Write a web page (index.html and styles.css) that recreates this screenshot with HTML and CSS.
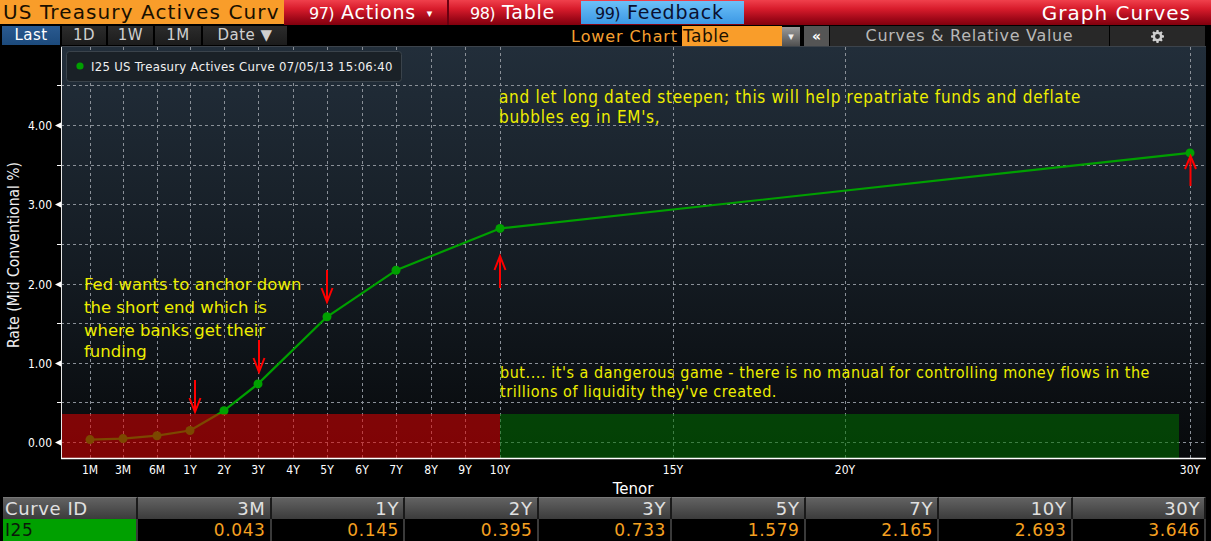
FILE: index.html
```html
<!DOCTYPE html>
<html>
<head>
<meta charset="utf-8">
<link rel="stylesheet" href="styles.css">
</head>
<body>
<div class="app">
  <div class="topbar">
    <div class="title">US Treasury Actives Curv</div>
    <div class="redbar">
      <div class="rbtn actions"><span class="num">97)</span> Actions <span class="caret">▾</span></div>
      <div class="rbtn tablebtn"><span class="num">98)</span> Table</div>
      <div class="rbtn feedback"><span class="num">99)</span> Feedback</div>
      <div class="spacer"></div>
      <div class="gc">Graph Curves</div>
    </div>
  </div>
  <div class="toolbar">
    <div class="tbtn active w-last">Last</div>
    <div class="tbtn w-1d">1D</div>
    <div class="tbtn w-1w">1W</div>
    <div class="tbtn w-1m">1M</div>
    <div class="tbtn w-date">Date ▼</div>
    <div class="spacer"></div>
    <div class="lc-label">Lower Chart</div>
    <div class="lc-select">Table</div>
    <div class="lc-drop">▾</div>
    <div class="collapse">«</div>
    <div class="crv">Curves &amp; Relative Value</div>
    <div class="gear">
      <svg width="13" height="13" viewBox="0 0 16 16"><path fill="#cfcfcf" d="M6.8 0h2.4l.4 2.1 1.3.6 1.8-1.2 1.7 1.7-1.2 1.8.6 1.3 2.2.4v2.4l-2.2.4-.6 1.3 1.2 1.8-1.7 1.7-1.8-1.2-1.3.6-.4 2.3H6.8l-.4-2.3-1.3-.6-1.8 1.2-1.7-1.7 1.2-1.8-.6-1.3L0 9.2V6.8l2.2-.4.6-1.3-1.2-1.8 1.7-1.7 1.8 1.2 1.3-.6z M8 5a3 3 0 1 0 0 6a3 3 0 1 0 0-6z" fill-rule="evenodd"/></svg>
    </div>
  </div>
  <svg class="chart" width="1211" height="451" viewBox="0 46 1211 451">
    <defs>
      <linearGradient id="bg" x1="0" y1="0" x2="0" y2="1">
        <stop offset="0" stop-color="#222e3a"/>
        <stop offset="0.55" stop-color="#141b22"/>
        <stop offset="1" stop-color="#07090b"/>
      </linearGradient>
    </defs>
    <rect x="61" y="47" width="1145" height="411" fill="url(#bg)"/>
    <line x1="61" y1="46.5" x2="1206" y2="46.5" stroke="#3c434b"/>
    <g class="grid" stroke="#8a9098" stroke-width="1" stroke-dasharray="3,3">
      <line x1="61" y1="85.5" x2="1206" y2="85.5"/>
      <line x1="61" y1="125.5" x2="1206" y2="125.5"/>
      <line x1="61" y1="165.5" x2="1206" y2="165.5"/>
      <line x1="61" y1="204.5" x2="1206" y2="204.5"/>
      <line x1="61" y1="244.5" x2="1206" y2="244.5"/>
      <line x1="61" y1="284.5" x2="1206" y2="284.5"/>
      <line x1="61" y1="323.5" x2="1206" y2="323.5"/>
      <line x1="61" y1="363.5" x2="1206" y2="363.5"/>
      <line x1="61" y1="402.5" x2="1206" y2="402.5"/>
      <line x1="61" y1="442.5" x2="1206" y2="442.5"/>
      <line x1="90.5" y1="47" x2="90.5" y2="458"/>
      <line x1="123.5" y1="47" x2="123.5" y2="458"/>
      <line x1="157.5" y1="47" x2="157.5" y2="458"/>
      <line x1="190.5" y1="47" x2="190.5" y2="458"/>
      <line x1="224.5" y1="47" x2="224.5" y2="458"/>
      <line x1="258.5" y1="47" x2="258.5" y2="458"/>
      <line x1="293.5" y1="47" x2="293.5" y2="458"/>
      <line x1="327.5" y1="47" x2="327.5" y2="458"/>
      <line x1="362.5" y1="47" x2="362.5" y2="458"/>
      <line x1="396.5" y1="47" x2="396.5" y2="458"/>
      <line x1="431.5" y1="47" x2="431.5" y2="458"/>
      <line x1="465.5" y1="47" x2="465.5" y2="458"/>
      <line x1="500.5" y1="47" x2="500.5" y2="458"/>
      <line x1="673.5" y1="47" x2="673.5" y2="458"/>
      <line x1="845.5" y1="47" x2="845.5" y2="458"/>
      <line x1="1190.5" y1="47" x2="1190.5" y2="458"/>
    </g>
    <polyline fill="none" stroke="#00a000" stroke-width="2.2" stroke-linejoin="round"
      points="90,439.6 123,438.6 157,435.7 190,430.5 224,410.7 258,383.9 327,316.8 396,270.3 500,228.4 1190,152.9"/>
    <g fill="#00a000">
      <circle cx="90" cy="439.6" r="4.5"/>
      <circle cx="123" cy="438.6" r="4.5"/>
      <circle cx="157" cy="435.7" r="4.5"/>
      <circle cx="190" cy="430.5" r="4.5"/>
      <circle cx="224" cy="410.7" r="4.5"/>
      <circle cx="258" cy="383.9" r="4.5"/>
      <circle cx="327" cy="316.8" r="4.5"/>
      <circle cx="396" cy="270.3" r="4.5"/>
      <circle cx="500" cy="228.4" r="4.5"/>
      <circle cx="1190" cy="152.9" r="4.5"/>
    </g>
    <rect x="61" y="414" width="439" height="44" fill="rgb(225,0,0)" fill-opacity="0.55"/>
    <rect x="500" y="414" width="679" height="44" fill="rgb(0,112,0)" fill-opacity="0.55"/>
    <line x1="61" y1="458.5" x2="1206" y2="458.5" stroke="#ffffff" stroke-width="1.5"/>
    <line x1="61.5" y1="47" x2="61.5" y2="458" stroke="#e8e8e8" stroke-width="1"/>
    <g stroke="#ffffff" stroke-width="1">
      <line x1="57" y1="85.5" x2="61" y2="85.5"/>
      <line x1="57" y1="165.5" x2="61" y2="165.5"/>
      <line x1="57" y1="244.5" x2="61" y2="244.5"/>
      <line x1="57" y1="323.5" x2="61" y2="323.5"/>
      <line x1="57" y1="402.5" x2="61" y2="402.5"/>
    </g>
    <g fill="#ffffff">
      <polygon points="55,125.5 61,122.5 61,128.5"/>
      <polygon points="55,204.5 61,201.5 61,207.5"/>
      <polygon points="55,284.5 61,281.5 61,287.5"/>
      <polygon points="55,363.5 61,360.5 61,366.5"/>
      <polygon points="55,442.5 61,439.5 61,445.5"/>
    </g>
    <g class="ylab" text-anchor="end">
      <text x="52" y="130">4.00</text>
      <text x="52" y="209">3.00</text>
      <text x="52" y="289">2.00</text>
      <text x="52" y="368">1.00</text>
      <text x="52" y="447">0.00</text>
    </g>
    <text class="ytitle" transform="translate(19,255) rotate(-90)" text-anchor="middle">Rate (Mid Conventional %)</text>
    <g class="xlab" text-anchor="middle">
      <text x="90" y="474">1M</text>
      <text x="123" y="474">3M</text>
      <text x="157" y="474">6M</text>
      <text x="190" y="474">1Y</text>
      <text x="224" y="474">2Y</text>
      <text x="258" y="474">3Y</text>
      <text x="293" y="474">4Y</text>
      <text x="327" y="474">5Y</text>
      <text x="362" y="474">6Y</text>
      <text x="396" y="474">7Y</text>
      <text x="431" y="474">8Y</text>
      <text x="465" y="474">9Y</text>
      <text x="500" y="474">10Y</text>
      <text x="673" y="474">15Y</text>
      <text x="845" y="474">20Y</text>
      <text x="1190" y="474">30Y</text>
    </g>
    <text class="tenor" x="633" y="494" text-anchor="middle">Tenor</text>
    <g stroke="#ff0000" stroke-width="2" fill="none">
      <line x1="195" y1="380" x2="195" y2="412"/>
      <polyline points="189.5,398 195,412 200.5,398"/>
      <line x1="259" y1="340" x2="259" y2="372"/>
      <polyline points="253.5,358 259,372 264.5,358"/>
      <line x1="327" y1="270" x2="327" y2="302"/>
      <polyline points="321.5,288 327,302 332.5,288"/>
      <line x1="500" y1="288" x2="500" y2="256"/>
      <polyline points="494.5,270 500,256 505.5,270"/>
      <line x1="1190.5" y1="186" x2="1190.5" y2="156"/>
      <polyline points="1185,169 1190.5,156 1196,169"/>
    </g>
    <rect x="66.5" y="51.5" width="335" height="30" rx="3" fill="#1a2127" stroke="#3a434b"/>
    <circle cx="80" cy="66" r="3.6" fill="#00a000"/>
    <text class="legend" x="91" y="71">I25 US Treasury Actives Curve 07/05/13 15:06:40</text>
    <g class="note1">
      <text x="84" y="290">Fed wants to anchor down</text>
      <text x="84" y="313">the short end which is</text>
      <text x="84" y="336">where banks get their</text>
      <text x="84" y="357">funding</text>
    </g>
    <g class="note2">
      <text x="499" y="103">and let long dated steepen; this will help repatriate funds and deflate</text>
      <text x="499" y="123">bubbles eg in EM's,</text>
    </g>
    <g class="note3">
      <text x="500" y="378">but.... it's a dangerous game - there is no manual for controlling money flows in the</text>
      <text x="500" y="397">trillions of liquidity they've created.</text>
    </g>
  </svg>
  <div class="dtable">
    <div class="th first">Curve ID</div>
    <div class="th">3M</div>
    <div class="th">1Y</div>
    <div class="th">2Y</div>
    <div class="th">3Y</div>
    <div class="th">5Y</div>
    <div class="th">7Y</div>
    <div class="th">10Y</div>
    <div class="th">30Y</div>
    <div class="td id">I25</div>
    <div class="td">0.043</div>
    <div class="td">0.145</div>
    <div class="td">0.395</div>
    <div class="td">0.733</div>
    <div class="td">1.579</div>
    <div class="td">2.165</div>
    <div class="td">2.693</div>
    <div class="td">3.646</div>
  </div>
</div>
</body>
</html>
```
FILE: styles.css
```css
* { box-sizing: border-box; }
html, body { margin: 0; padding: 0; background: #000; }
body { width: 1211px; height: 541px; overflow: hidden; font-family: "DejaVu Sans", "Liberation Sans", sans-serif; }
.app { display: flex; flex-direction: column; width: 1211px; }

.topbar { display: flex; height: 25px; }
.title {
  width: 284px; background: #f99d2a; color: #1a1000;
  font-size: 20px; letter-spacing: 1.1px; line-height: 24px; padding-left: 3px;
  white-space: nowrap; overflow: hidden; border-bottom: 1px solid #000;
}
.redbar {
  flex: 1; display: flex; align-items: stretch;
  background: linear-gradient(#f0404c 0%, #d81c2c 35%, #a00818 75%, #82000e 100%);
}
.rbtn { color: #fff; font-size: 19px; letter-spacing: 0.8px; line-height: 24px; white-space: nowrap; }
.rbtn .num { font-size: 16px; letter-spacing: -0.5px; }
.actions { width: 165px; padding-left: 25px; border-right: 2px solid #6a0010; }
.actions .caret { font-size: 11px; margin-left: 4px; vertical-align: 2px; }
.tablebtn { width: 132px; padding-left: 21px; }
.feedback {
  width: 163px; margin: 1px 0 1px 0; padding-left: 14px;
  background: linear-gradient(#6cc0f8, #3c98e4); color: #0a1030;
  line-height: 22px;
}
.spacer { flex: 1; }
.gc { color: #fff; font-size: 20px; letter-spacing: 1px; line-height: 26px; padding-right: 20px; }

.toolbar { display: flex; height: 21px; padding-top: 1px; padding-right: 6px; align-items: stretch; }
.tbtn {
  margin-left: 2px; background: linear-gradient(#2c2c2c, #1c1c1c); color: #d0d0d0;
  font-size: 15px; letter-spacing: 0.5px; line-height: 19px; text-align: center; height: 19px;
}
.tbtn.active { background: linear-gradient(#2a5a90, #1c4a7c); color: #fff; }
.w-last { width: 58px; }
.w-1d { width: 44px; }
.w-1w { width: 45px; }
.w-1m { width: 46px; }
.w-date { width: 84px; }
.lc-label { color: #f7a030; font-size: 16px; letter-spacing: 0.9px; line-height: 21px; padding-right: 4px; }
.lc-select { width: 100px; background: #f99d2a; color: #1a1000; font-size: 17px; letter-spacing: 0.5px; line-height: 21px; padding-left: 1px; height: 21px; }
.lc-drop { width: 18px; height: 19px; margin-top: 1px; background: linear-gradient(#9a9a9a, #505050); color: #eee; font-size: 11px; line-height: 19px; text-align: center; }
.collapse { width: 25px; margin-left: 4px; height: 20px; background: #555; color: #fff; font-size: 14px; line-height: 21px; text-align: center; font-weight: bold; }
.crv { width: 279px; margin-left: 1px; height: 20px; background: #282828; color: #b8b8b8; font-size: 16px; letter-spacing: 0.7px; line-height: 20px; text-align: center; }
.gear { width: 95px; margin-left: 1px; height: 20px; background: #282828; display: flex; align-items: center; justify-content: center; }

.chart { display: block; }
.chart .ylab text { fill: #fff; font-size: 12px; font-family: "DejaVu Sans Condensed", "DejaVu Sans", sans-serif; font-stretch: condensed; }
.chart .ytitle { fill: #f0f0f0; font-size: 15.5px; font-family: "DejaVu Sans Condensed", "DejaVu Sans", sans-serif; font-stretch: condensed; }
.chart .xlab text { fill: #fff; font-size: 12px; font-family: "DejaVu Sans Condensed", "DejaVu Sans", sans-serif; font-stretch: condensed; }
.chart .tenor { fill: #fff; font-size: 15px; }
.chart .legend { fill: #f0f0f0; font-size: 13px; letter-spacing: 0.3px; font-family: "DejaVu Sans Condensed", "DejaVu Sans", sans-serif; font-stretch: condensed; }
.chart .note1 text { fill: #eeee00; font-size: 16.5px; font-family: "DejaVu Sans", sans-serif; }
.chart .note2 text { fill: #eeee00; font-size: 17px; letter-spacing: 0.7px; font-family: "DejaVu Sans Condensed", "DejaVu Sans", sans-serif; font-stretch: condensed; }
.chart .note3 text { fill: #eeee00; font-size: 16px; letter-spacing: 0.55px; font-family: "DejaVu Sans Condensed", "DejaVu Sans", sans-serif; font-stretch: condensed; }

.dtable {
  display: grid; grid-template-columns: 135px repeat(8, 133.5px);
  margin-left: 3px; width: 1203px; row-gap: 0;
}
.th {
  height: 22px; background: linear-gradient(#626262, #3c3c3c); color: #e0e0e0;
  font-size: 18px; letter-spacing: 0.6px; line-height: 22px; text-align: right; padding-right: 4px;
  border-right: 2px solid #1a1a1a; border-top: 1px solid #777;
}
.th.first { text-align: left; padding-left: 2px; }
.td {
  height: 22px; background: #000; color: #f5a020; font-size: 17px; letter-spacing: 0.6px; line-height: 22px;
  text-align: right; padding-right: 4px; border-right: 2px solid #3a3a3a;
}
.td.id { background: #00a000; color: #0a1a0a; text-align: left; padding-left: 2px; }
```
